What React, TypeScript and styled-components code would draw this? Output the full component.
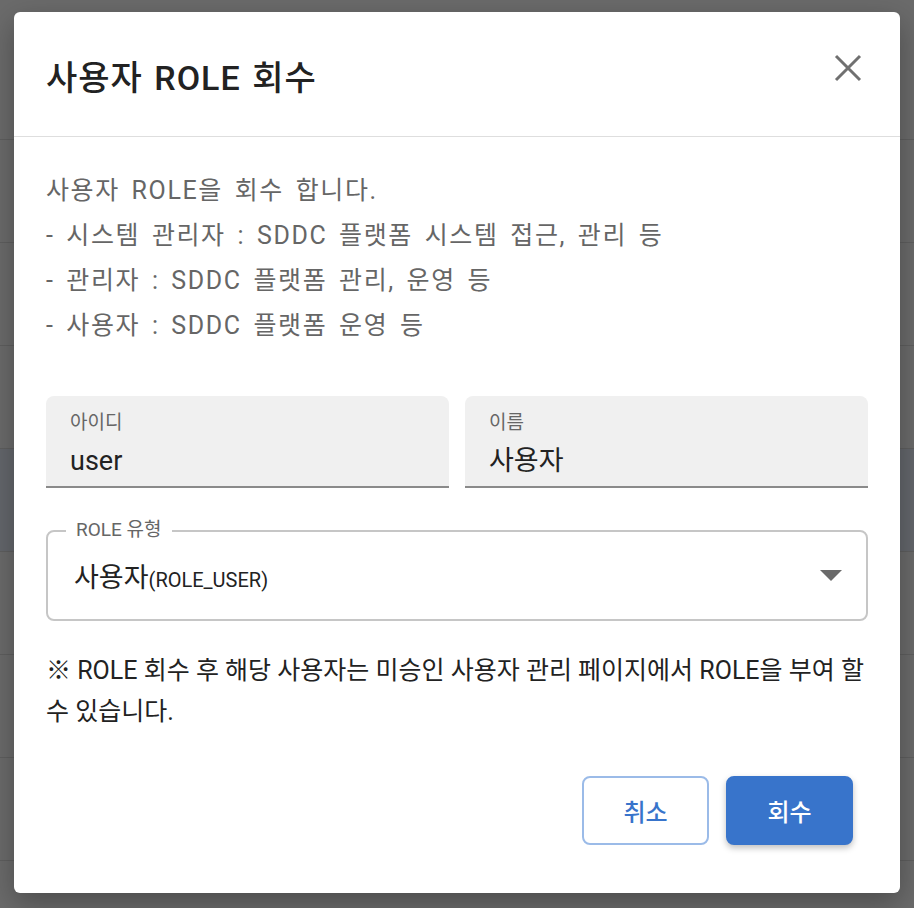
import React from 'react'
import styled, { createGlobalStyle } from 'styled-components'

const GlobalStyle = createGlobalStyle`
  html, body {
    margin: 0;
    padding: 0;
    width: 914px;
    height: 908px;
    overflow: hidden;
    background: #6b6b6b;
    font-family: Roboto, "Noto Sans CJK KR", "Noto Sans", sans-serif;
  }
  * { box-sizing: border-box; }
`

/**
 * backdrop (table under the overlay)
 */
const Backdrop = styled.div`
  position: relative;
  width: 914px;
  height: 908px;
  background: #6b6b6b;
  overflow: hidden;
`

const HeadRow = styled.div`
  height: 140px;
  border-bottom: 1px solid #5f5f5f;
`

const Row = styled.div<{ $selected?: boolean }>`
  height: 103px;
  border-bottom: 1px solid #5f5f5f;
  background: ${(p) => (p.$selected ? '#64676c' : 'transparent')};
`

/**
 * dialog
 */
const Dialog = styled.div`
  position: absolute;
  top: 12px;
  left: 14px;
  width: 886px;
  height: 881px;
  background: #fff;
  border-radius: 6px;
  box-shadow: 0 10px 30px rgba(0, 0, 0, 0.3);
  display: flex;
  flex-direction: column;
`

const Header = styled.div`
  height: 125px;
  padding: 0 32px;
  display: flex;
  align-items: center;
  justify-content: space-between;
  border-bottom: 1.5px solid #dedede;
`

const Title = styled.h2`
  margin: 0;
  padding-top: 2px;
  font-size: 34px;
  font-weight: 500;
  color: #222;
  letter-spacing: 1px;
  word-spacing: 2px;
`

const CloseButton = styled.button`
  width: 40px;
  height: 40px;
  margin-top: -12px;
  border: none;
  background: none;
  padding: 0;
  display: flex;
  align-items: center;
  justify-content: center;
  cursor: pointer;
`

const Body = styled.div`
  flex: 1;
  padding: 31px 32px 48px;
  display: flex;
  flex-direction: column;
`

const Description = styled.div`
  font-size: 25px;
  line-height: 45px;
  color: #666;
  letter-spacing: 1.6px;
  word-spacing: 4px;
`

const FieldRow = styled.div`
  display: grid;
  grid-template-columns: 1fr 1fr;
  gap: 16px;
  margin-top: 48px;
`

const FilledField = styled.div`
  height: 92px;
  background: #f0f0f0;
  border-radius: 8px 8px 0 0;
  border-bottom: 2px solid #8a8a8a;
  padding: 13px 24px 0;
  display: flex;
  flex-direction: column;
`

const FieldLabel = styled.span`
  font-size: 19px;
  line-height: 28px;
  color: #666;
`

const FieldValue = styled.span`
  margin-top: 6px;
  font-size: 27px;
  line-height: 36px;
  color: #222;
`

const SelectBox = styled.div`
  position: relative;
  margin-top: 42px;
  height: 91px;
  border: 2px solid #c6c6c6;
  border-radius: 8px;
  padding: 0 24px 0 26px;
  display: flex;
  align-items: center;
  justify-content: space-between;
`

const Legend = styled.span`
  position: absolute;
  top: -15px;
  left: 18px;
  padding: 0 10px;
  background: #fff;
  font-size: 19px;
  line-height: 26px;
  color: #666;
`

const SelectValue = styled.span`
  font-size: 27px;
  color: #222;
  display: flex;
  align-items: baseline;
`

const SelectSub = styled.span`
  font-size: 20px;
`

const Note = styled.p`
  margin: 29px 0 0;
  font-size: 25px;
  line-height: 41px;
  color: #222;
`

const Actions = styled.div`
  margin-top: auto;
  display: flex;
  justify-content: flex-end;
  gap: 17px;
  padding-right: 15px;
`

const Button = styled.button<{ $primary?: boolean }>`
  width: 127px;
  height: 69px;
  border-radius: 8px;
  font-family: inherit;
  font-size: 24px;
  font-weight: 500;
  cursor: pointer;
  border: 2px solid ${(p) => (p.$primary ? '#3874cb' : '#9bbbe8')};
  background: ${(p) => (p.$primary ? '#3874cb' : '#fff')};
  color: ${(p) => (p.$primary ? '#fff' : '#3874cb')};
  box-shadow: ${(p) =>
    p.$primary ? '0 3px 6px rgba(0, 0, 0, 0.25)' : 'none'};
`

const App: React.FC = () => {
  return (
    <>
      <GlobalStyle />
      <Backdrop>
        <HeadRow />
        <Row />
        <Row />
        <Row />
        <Row $selected />
        <Row />
        <Row />
        <Row />

        <Dialog>
          <Header>
            <Title>사용자 ROLE 회수</Title>
            <CloseButton aria-label="닫기">
              <svg width="28" height="28" viewBox="0 0 28 28">
                <path
                  d="M2 2 L26 26 M26 2 L2 26"
                  stroke="#707070"
                  strokeWidth="3"
                  fill="none"
                />
              </svg>
            </CloseButton>
          </Header>
          <Body>
            <Description>
              사용자 ROLE을 회수 합니다.
              <br />- 시스템 관리자 : SDDC 플랫폼 시스템 접근, 관리 등
              <br />- 관리자 : SDDC 플랫폼 관리, 운영 등
              <br />- 사용자 : SDDC 플랫폼 운영 등
            </Description>

            <FieldRow>
              <FilledField>
                <FieldLabel>아이디</FieldLabel>
                <FieldValue>user</FieldValue>
              </FilledField>
              <FilledField>
                <FieldLabel>이름</FieldLabel>
                <FieldValue>사용자</FieldValue>
              </FilledField>
            </FieldRow>

            <SelectBox>
              <Legend>ROLE 유형</Legend>
              <SelectValue>
                사용자<SelectSub>(ROLE_USER)</SelectSub>
              </SelectValue>
              <svg width="22" height="12" viewBox="0 0 22 12">
                <path d="M0 0 H22 L11 11 Z" fill="#6a6a6a" />
              </svg>
            </SelectBox>

            <Note>
              ※ ROLE 회수 후 해당 사용자는 미승인 사용자 관리 페이지에서 ROLE을
              부여 할 수 있습니다.
            </Note>

            <Actions>
              <Button>취소</Button>
              <Button $primary>회수</Button>
            </Actions>
          </Body>
        </Dialog>
      </Backdrop>
    </>
  )
}

export default App
